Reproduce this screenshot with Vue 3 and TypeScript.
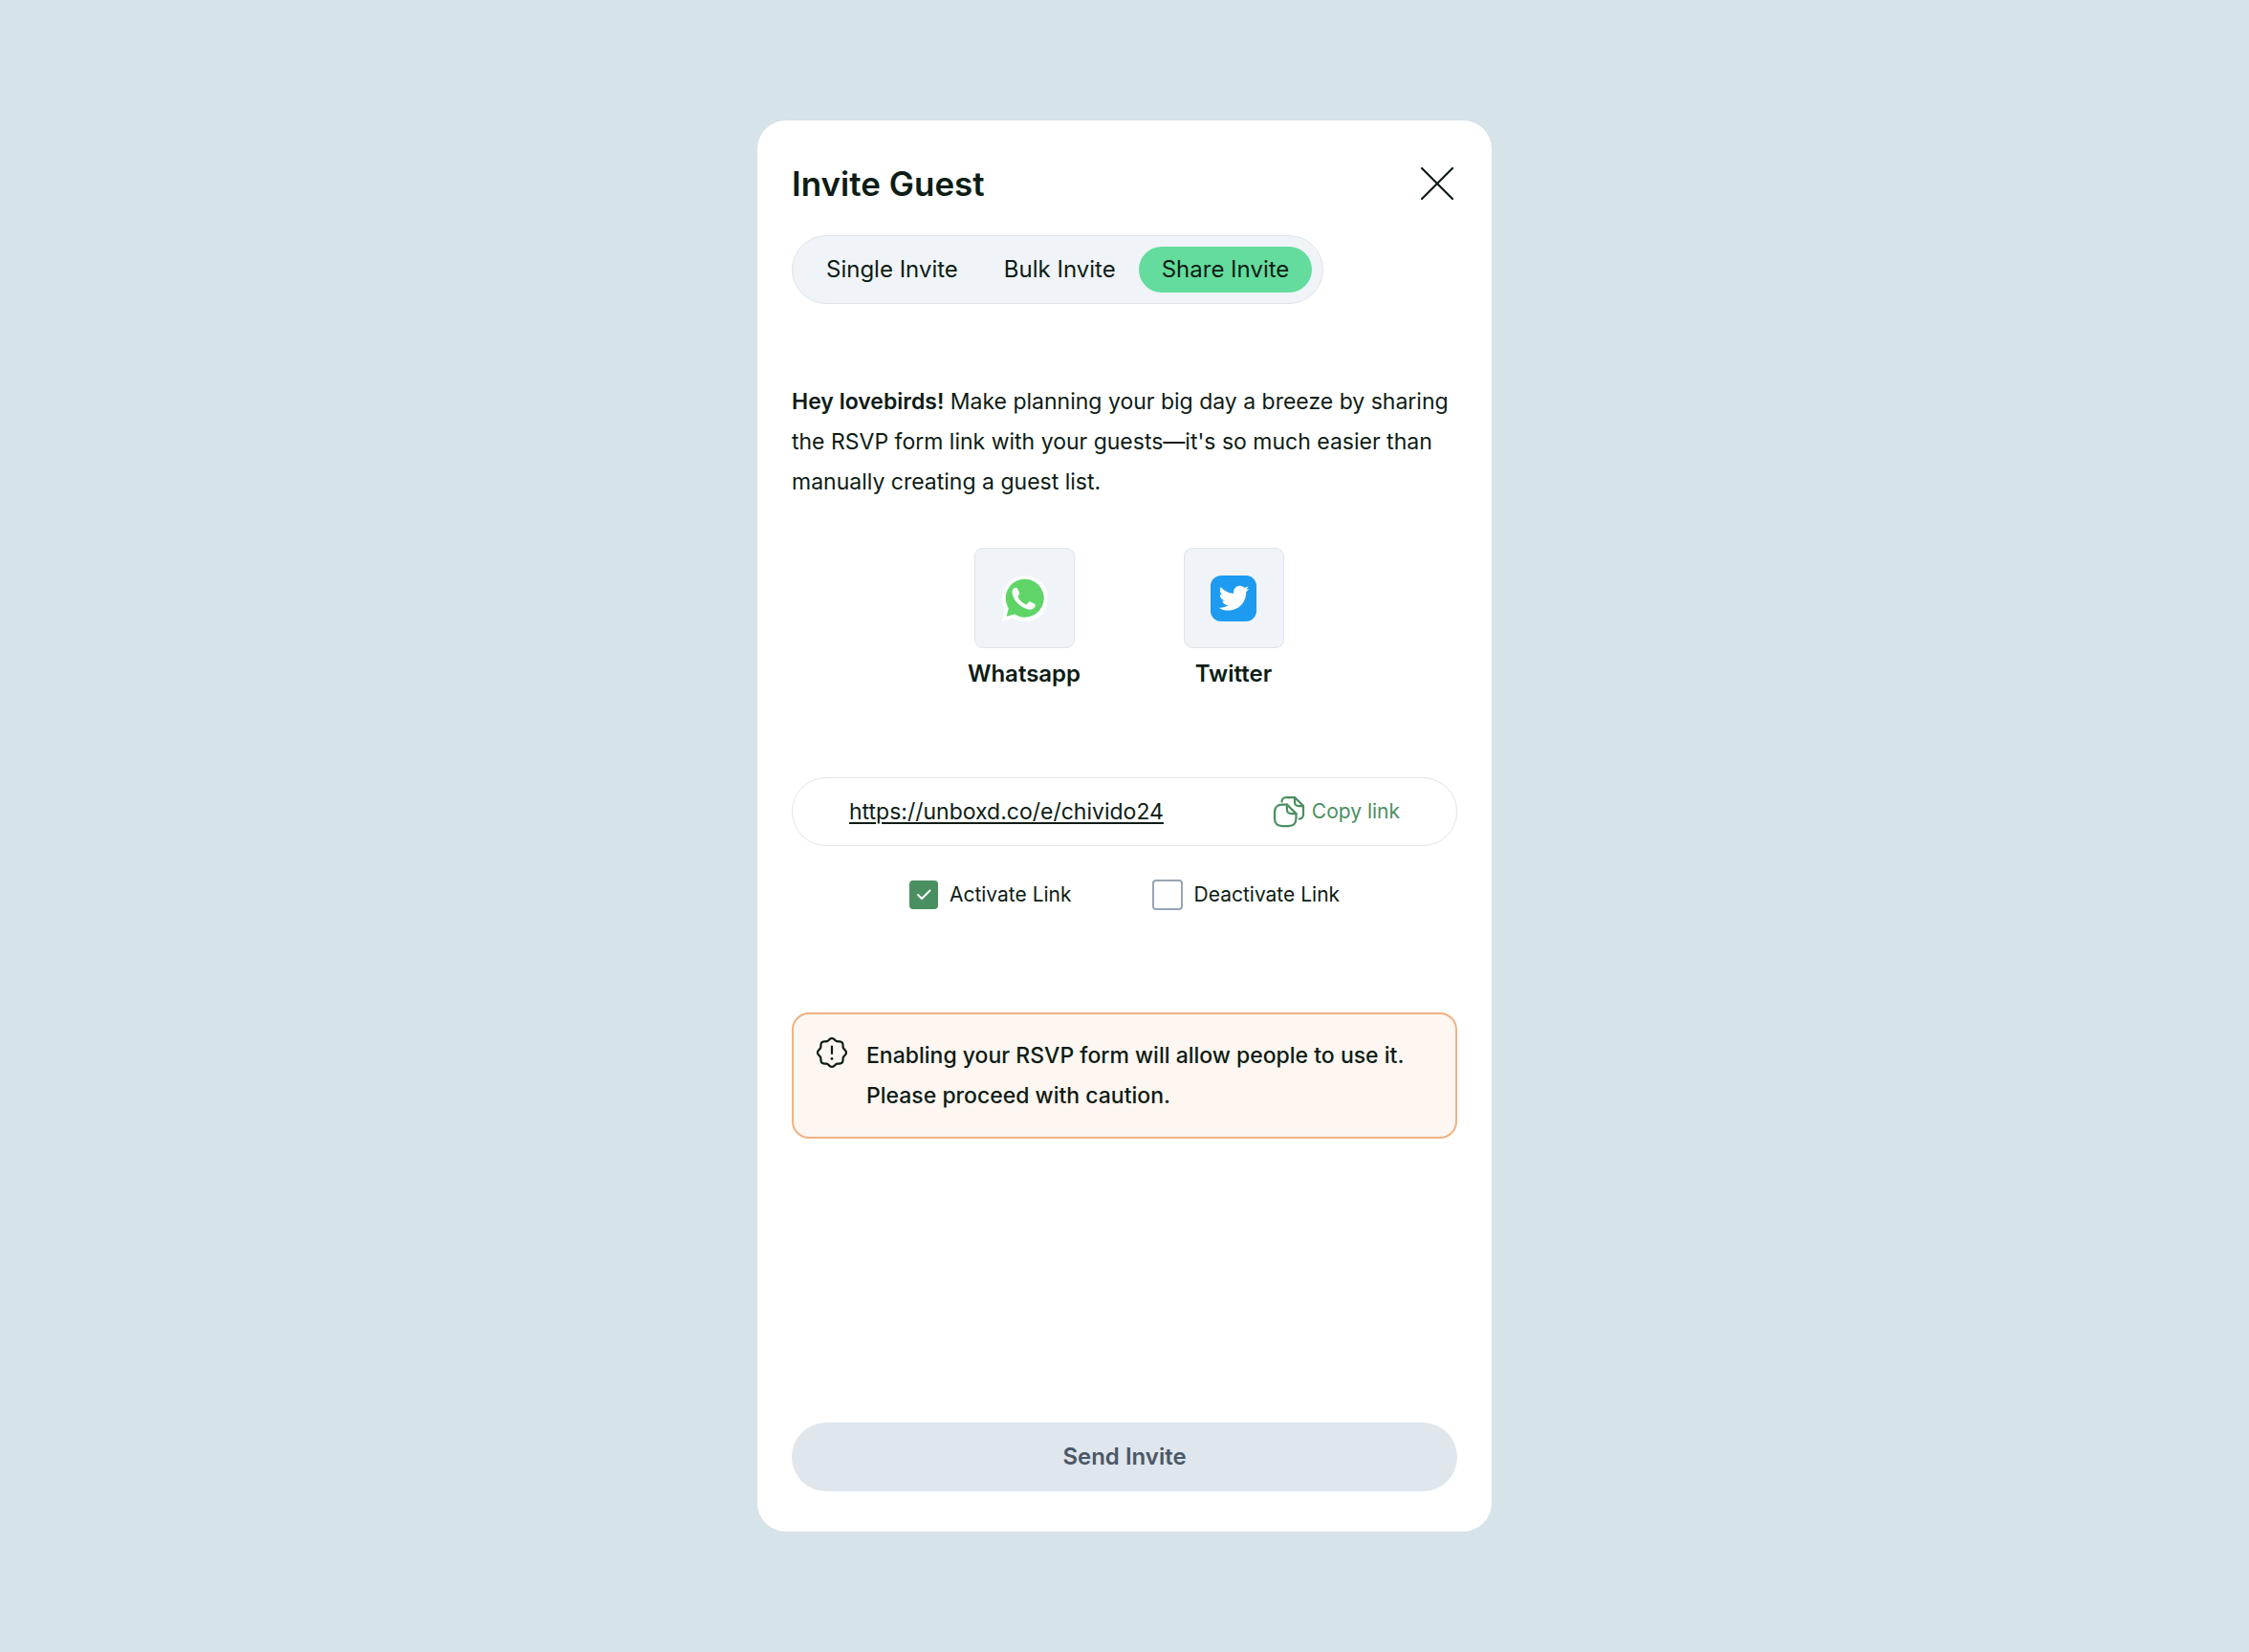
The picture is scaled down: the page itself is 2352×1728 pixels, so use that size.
<script setup lang="ts">
import { ref } from 'vue'

const tabs = ['Single Invite', 'Bulk Invite', 'Share Invite']
const activeTab = ref('Share Invite')
const linkActive = ref(true)
const linkInactive = ref(false)

// Eight-lobed badge outline around the centre of a 36 unit box
const badge =
  'M' +
  Array.from({ length: 96 }, (_, i) => {
    const a = (i / 96) * Math.PI * 2
    const r = 13.9 + 1.05 * Math.cos(8 * a)
    return `${(18 + r * Math.sin(a)).toFixed(2)} ${(18 - r * Math.cos(a)).toFixed(2)}`
  }).join('L') +
  'Z'
</script>

<template>
  <main class="page">
    <section class="card" aria-labelledby="dialog-title">
      <header class="head">
        <h1 id="dialog-title">Invite Guest</h1>
        <button class="close" type="button" aria-label="Close">
          <svg viewBox="0 0 36 36" width="36" height="36" fill="none" stroke="currentColor" stroke-width="2.2" stroke-linecap="round">
            <path d="M2 2L34 34M34 2L2 34" />
          </svg>
        </button>
      </header>

      <nav class="tabs">
        <button
          v-for="tab in tabs"
          :key="tab"
          type="button"
          class="tab"
          :class="{ active: tab === activeTab }"
          @click="activeTab = tab"
        >{{ tab }}</button>
      </nav>

      <p class="intro">
        <strong>Hey lovebirds!</strong> Make planning your big day a breeze by sharing the RSVP form link with your guests—it's so much easier than manually creating a guest list.
      </p>

      <div class="shares">
        <button class="share" type="button">
          <span class="tile">
            <svg viewBox="0 0 48 48" width="48" height="48">
              <path fill="#fff" d="M0.5 48L3.9 35.6A24 24 0 1 1 12.6 44.7Z" />
              <path fill="#5fd568" d="M5.6 42.8L7.8 34.4A20 20 0 1 1 14 40.6Z" />
              <path fill="#fff" d="M13 13.6C14.5 12.4 16.6 12.5 17.4 14.2L19 18C19.4 19.2 18.9 20.2 17.4 21.8C18.8 25.6 22 28.8 26.4 30.6L28.6 28C29.3 27.2 30 27.1 30.9 27.5L34.8 29.4C35.9 30 35.9 31 35.5 32.2C34.5 35 31.4 36 28.6 35.4C20.5 33.6 13.4 26.8 11.8 19.4C11.3 17 11.6 14.8 13 13.6Z" />
            </svg>
          </span>
          <span class="share-name">Whatsapp</span>
        </button>
        <button class="share" type="button">
          <span class="tile">
            <svg viewBox="0 0 48 48" width="48" height="48">
              <rect width="48" height="48" rx="11" fill="#1d9bf0" />
              <g transform="translate(7.3 6.9) scale(1.4)">
                <path fill="#fff" d="M23.643 4.937c-.835.37-1.732.62-2.675.733.962-.576 1.7-1.49 2.048-2.578-.9.534-1.897.922-2.958 1.13-.85-.904-2.06-1.47-3.4-1.47-2.572 0-4.658 2.086-4.658 4.66 0 .364.042.718.12 1.06-3.873-.195-7.304-2.05-9.602-4.868-.4.69-.63 1.49-.63 2.342 0 1.616.823 3.043 2.072 3.878-.764-.025-1.482-.234-2.11-.583v.06c0 2.257 1.605 4.14 3.737 4.568-.392.106-.803.162-1.227.162-.3 0-.593-.028-.877-.082.593 1.85 2.313 3.198 4.352 3.234-1.595 1.25-3.604 1.995-5.786 1.995-.376 0-.747-.022-1.112-.065 2.062 1.323 4.51 2.093 7.14 2.093 8.57 0 13.255-7.098 13.255-13.254 0-.2-.005-.402-.014-.602.91-.658 1.7-1.477 2.323-2.41z" />
              </g>
            </svg>
          </span>
          <span class="share-name">Twitter</span>
        </button>
      </div>

      <div class="link-row">
        <a class="url" href="https://unboxd.co/e/chivido24">https://unboxd.co/e/chivido24</a>
        <button class="copy" type="button">
          <svg viewBox="0 0 24 24" width="36" height="36" fill="none" stroke="currentColor" stroke-width="1.5" stroke-linecap="round" stroke-linejoin="round">
            <path d="M17 13.4V16.4C17 20.4 15.4 22 11.4 22H7.6C3.6 22 2 20.4 2 16.4V12.6C2 8.6 3.6 7 7.6 7H10.6" />
            <path d="M17 13.4H13.8C11.4 13.4 10.6 12.6 10.6 10.2V7L17 13.4Z" />
            <path d="M11.6 2H15.6" />
            <path d="M7 5C7 3.34 8.34 2 10 2H12.62" />
            <path d="M22 8V14.19C22 15.74 20.74 17 19.19 17" />
            <path d="M22 8H19C16.75 8 16 7.25 16 5V2L22 8Z" />
          </svg>
          Copy link
        </button>
      </div>

      <div class="checks">
        <label class="check">
          <input v-model="linkActive" type="checkbox" />
          <span>Activate Link</span>
        </label>
        <label class="check">
          <input v-model="linkInactive" type="checkbox" />
          <span>Deactivate Link</span>
        </label>
      </div>

      <div class="notice" role="note">
        <svg viewBox="0 0 36 36" width="36" height="36" fill="none" stroke="currentColor" stroke-width="2.2" stroke-linecap="round" stroke-linejoin="round">
          <path :d="badge" />
          <path d="M18 11.5V19" />
          <circle cx="18" cy="24.4" r="1.4" fill="currentColor" stroke="none" />
        </svg>
        <p>Enabling your RSVP form will allow people to use it. Please proceed with caution.</p>
      </div>

      <button class="send" type="button">Send Invite</button>
    </section>
  </main>
</template>

<style>
body {
  background: #d6e3e8;
}
</style>

<style scoped>
.page {
  display: flex;
  align-items: center;
  justify-content: center;
  min-height: 100vh;
  box-sizing: border-box;
  padding: 24px;
  font-family: Inter, sans-serif;
  font-size: 23px;
  line-height: 42px;
  color: #0d1c15;
}
.page * {
  box-sizing: border-box;
}
button {
  font: inherit;
  color: inherit;
  border: 0;
  padding: 0;
  background: none;
  cursor: pointer;
}
svg {
  display: block;
  flex: none;
}
.card {
  display: flex;
  flex-direction: column;
  width: 100%;
  max-width: 768px;
  min-height: 1476px;
  padding: 42px 36px;
  border-radius: 30px;
  background: #fff;
}
.head {
  display: flex;
  align-items: center;
  justify-content: space-between;
  height: 48px;
  padding-right: 3px;
}
h1 {
  margin: 0;
  font-size: 35px;
  font-weight: 600;
}
.tabs {
  display: flex;
  align-self: flex-start;
  align-items: center;
  height: 72px;
  margin-top: 30px;
  padding: 0 11px;
  border: 1px solid #dde5ea;
  border-radius: 36px;
  background: #f0f4f8;
}
.tab {
  height: 48px;
  padding: 0 24px;
  border-radius: 24px;
  font-size: 24px;
}
.tab.active {
  background: #64dc9e;
}
.intro {
  margin: 81px 0 0;
}
strong {
  font-weight: 600;
}
.shares {
  display: flex;
  justify-content: center;
  gap: 90px;
  margin-top: 48px;
  padding-left: 9px;
}
.share {
  display: flex;
  flex-direction: column;
  align-items: center;
  gap: 6px;
  width: 129px;
}
.tile {
  display: grid;
  place-items: center;
  width: 105px;
  height: 105px;
  border: 1px solid #dde5ea;
  border-radius: 9px;
  background: #f0f4f8;
}
.share-name {
  font-size: 24px;
  font-weight: 600;
}
.link-row {
  display: flex;
  align-items: center;
  justify-content: space-between;
  height: 72px;
  margin-top: 87px;
  padding: 0 59px;
  border: 1px solid #dfe5ea;
  border-radius: 36px;
}
.url {
  color: inherit;
  text-decoration-thickness: 2px;
  text-underline-offset: 3px;
}
.copy {
  display: flex;
  align-items: center;
  gap: 6px;
  font-size: 21px;
  color: #4a8f60;
}
.checks {
  display: flex;
  justify-content: center;
  gap: 84px;
  height: 42px;
  margin-top: 30px;
  font-size: 21px;
}
.check {
  display: flex;
  align-items: center;
  gap: 12px;
}
.check input {
  appearance: none;
  width: 32px;
  height: 32px;
  margin: 0;
  border: 2px solid #98a4b5;
  border-radius: 4px;
}
.check input:checked {
  width: 30px;
  height: 30px;
  border: 0;
  background: #4a8f60 url("data:image/svg+xml,%3Csvg xmlns='http://www.w3.org/2000/svg' viewBox='0 0 30 30' fill='none' stroke='white' stroke-width='2' stroke-linecap='round' stroke-linejoin='round'%3E%3Cpath d='M9 15L13 19L21.500 10.500'/%3E%3C/svg%3E");
}
.notice {
  display: flex;
  gap: 18px;
  margin-top: 102px;
  padding: 22px;
  border: 2px solid #f0b184;
  border-radius: 18px;
  background: #fef6f1;
}
.notice p {
  margin: 0;
  font-weight: 500;
}
.send {
  height: 72px;
  margin-top: auto;
  border-radius: 36px;
  background: #dfe6ec;
  color: #4b5768;
  font-size: 24px;
  font-weight: 600;
}
</style>
